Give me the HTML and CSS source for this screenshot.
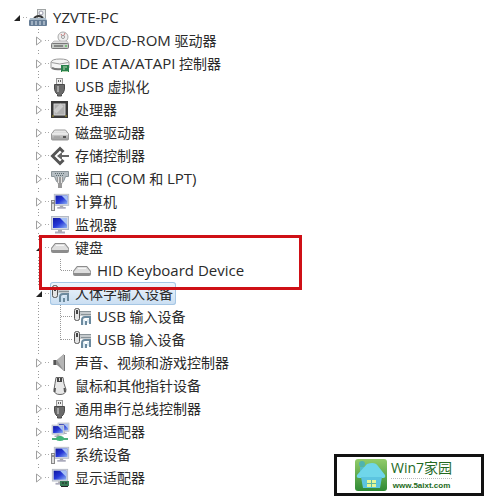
FILE: index.html
```
<!DOCTYPE html>
<html lang="zh-CN">
<head>
<meta charset="utf-8">
<title>设备管理器</title>
<link rel="stylesheet" href="styles.css">
</head>
<body>
<svg class="defs" aria-hidden="true">
  <defs>
    <linearGradient id="metal" x1="0" y1="0" x2="0" y2="1"><stop offset="0" stop-color="#f4f4f4"/><stop offset="1" stop-color="#9a9a9a"/></linearGradient>
    <linearGradient id="screen" x1="0" y1="0" x2="1" y2="1"><stop offset="0" stop-color="#1018a0"/><stop offset=".5" stop-color="#2638d8"/><stop offset="1" stop-color="#8fb4f4"/></linearGradient>
    <linearGradient id="leaf" x1="0" y1="0" x2="0" y2="1"><stop offset="0" stop-color="#92cc6a"/><stop offset="1" stop-color="#2f8a34"/></linearGradient>
    <symbol id="pc" viewBox="0 0 20 20"><rect x="9.500" y="1.500" width="8" height="12" fill="#e4e8e8" stroke="#a0a4a4"/><circle cx="13" cy="5" r="2" fill="#fff" stroke="#99a"/><path d="M6 10q5-4 9 0" fill="none" stroke="#333" stroke-width="2"/><path d="M2 10h16l1 3H1z" fill="#a9bac8"/><rect x="1" y="12" width="18" height="6" rx="1" fill="#667d96"/><path d="M4 13v4M8 13v4M12 13v4M16 13v4" stroke="#dce6ee"/></symbol>
    <symbol id="dvd" viewBox="0 0 20 20"><circle cx="13" cy="6" r="5" fill="#eee" stroke="#aaa"/><path d="M11 3l2 3 2-4" fill="none" stroke="#c77"/><circle cx="13" cy="6" r="1.500" fill="#fff" stroke="#999"/><path d="M4 10h13l2 3H1z" fill="#ddd" stroke="#999" stroke-width=".5"/><rect x="1.500" y="12.500" width="17" height="5" rx="1" fill="#c4c8c4" stroke="#777"/><path d="M4 15h9" stroke="#444"/><path d="M15 15h2" stroke="#3b3"/></symbol>
    <symbol id="ide" viewBox="0 0 20 20"><path d="M1 8q1-3 9-3t9 3v6q-9 3-18 0z" fill="#f4f4f4" stroke="#999"/><path d="M1.500 8.500q8 3 17 0" fill="none" stroke="#999"/><path d="M2 14q4 2 9 1" fill="none" stroke="#777" stroke-width="2"/><rect x="11" y="11" width="8" height="7" fill="#28804c"/><path d="M13 13h4M13 15h2M12 17.500h6" stroke="#b8d8b0"/></symbol>
    <symbol id="usb" viewBox="0 0 20 20"><rect x="6.500" y="1.500" width="6" height="6" fill="#eee" stroke="#999"/><path d="M8.500 3v2M10.500 3v2" stroke="#666"/><path d="M4.500 7.500h10v5q-1 4-3 5v1.500h-4v-1.500q-2-1-3-5z" fill="#6a6a6a" stroke="#4a4a4a"/><path d="M8 9v6" stroke="#a4a4a4" stroke-width="2"/></symbol>
    <symbol id="cpu" viewBox="0 0 20 20"><rect x="1" y="1" width="17" height="17" fill="#3a3a3a"/><rect x="4" y="4" width="11" height="11" fill="#b0b0b0" stroke="#d4d4d4"/><path d="M5 12L12 5" stroke="#ccc" stroke-width="4"/><path d="M2 16h2M15 16h2" stroke="#a93"/></symbol>
    <symbol id="disk" viewBox="0 0 20 20"><path d="M1.500 11l3-4h11l3 4v5q0 1-1 1h-15q-1 0-1-1z" fill="url(#metal)" stroke="#999"/><path d="M2 11h16" stroke="#fff"/><path d="M4 14h6" stroke="#999"/><rect x="13" y="13" width="3" height="2" fill="#555"/></symbol>
    <symbol id="storage" viewBox="0 0 20 20"><path d="M13.500 6L10 2.500 2.500 10l7.500 7.500L13.500 14" fill="none" stroke="#555" stroke-width="3"/><path d="M19 10H9" stroke="#666" stroke-width="2"/><path d="M7 10l5-4v8z" fill="#666"/></symbol>
    <symbol id="port" viewBox="0 0 20 20"><path d="M1.500 2.500h17v5h-3l-2 5h-7l-2-5h-3z" fill="#b5bdc2" stroke="#8a9499"/><path d="M5 4.500h10M6 6.500h8" stroke="#5c6c70" stroke-dasharray="1 1"/><path d="M7 8h6v5l-1 2v4H8v-4l-1-2z" fill="#999"/><path d="M8.500 8v6M11.500 8v6" stroke="#e4e4e4"/></symbol>
    <symbol id="monitor" viewBox="0 0 20 20"><rect x="1.500" y="1.500" width="17" height="13" fill="#d5dae3" stroke="#b4bac4"/><rect x="3" y="3" width="14" height="10" fill="url(#screen)"/><path d="M10 3h7v7z" fill="#a7c1f4"/><rect x="8" y="15" width="4" height="2" fill="#aaa"/><path d="M5 17.500h10" stroke="#aab" stroke-width="2"/></symbol>
    <symbol id="computer" viewBox="0 0 20 20"><use href="#monitor" x="3" y="1" width="17" height="17"/><rect x="1.500" y="8.500" width="3" height="10" fill="#ddd" stroke="#888"/><path d="M2 11h2" stroke="#444"/></symbol>
    <symbol id="keyboard" viewBox="0 0 20 20"><path d="M5 5h10l4 5v3q0 2-2 2H3q-2 0-2-2v-3z" fill="#8c8c8c"/><path d="M5.500 6h9l4 5q0 1-1 1h-15q-1 0-1-1z" fill="#dedede"/><path d="M6 7.500h8" stroke="#f6f6f6"/></symbol>
    <symbol id="hid" viewBox="0 0 20 20"><path d="M8 4h11v5H8z" fill="#c6cbce"/><path d="M8 4.500h11M9 7.500h10" stroke="#8a9499"/><rect x="2.500" y="1.500" width="5" height="12" rx="2" fill="#e4e4e4" stroke="#555"/><path d="M5 3v4" stroke="#444" stroke-width="2"/><path d="M10 18v-5q0-3 3-3h5v7M14 18v-4" fill="none" stroke="#6c8a9e" stroke-width="2"/><path d="M12 18v-5M16 16v-4" stroke="#b9d6e8"/></symbol>
    <symbol id="sound" viewBox="0 0 20 20"><path d="M3 7h4l7-6v17l-7-6H3z" fill="#929292"/><path d="M7 7l7-6v17" fill="#b5b5b5"/><path d="M14.500 2v16" stroke="#777"/><path d="M5 7v5" stroke="#555" stroke-width="2"/></symbol>
    <symbol id="mouse" viewBox="0 0 20 20"><path d="M6 1.500h7l1 6 2 6q0 5-6 5t-6-5l1-6z" fill="#e7e7e7" stroke="#666"/><path d="M7 2h5v4H7z" fill="#444"/><path d="M9.500 2v3" stroke="#ddd"/><path d="M5 12l-.500 4M14.500 12l.500 4" stroke="#555" stroke-width="2"/></symbol>
    <symbol id="network" viewBox="0 0 20 20"><use href="#monitor" x="7" y="0" width="13" height="13"/><use href="#monitor" x="1" y="2" width="14" height="14"/><path d="M2 17h16M10 14v3" stroke="#4cae7a" stroke-width="2"/><ellipse cx="10" cy="16.500" rx="4" ry="2.500" fill="#42b478"/></symbol>
    <symbol id="display" viewBox="0 0 20 20"><use href="#monitor" x="1" y="0" width="18" height="18"/><rect x="10" y="13" width="9" height="5" fill="#377b55"/><path d="M12 15h2M15 15h2M11 18.500h7" stroke="#222"/></symbol>
    <symbol id="closed" viewBox="0 0 8 10"><path d="M1.500 1l5 4-5 4z" fill="#fff" stroke="#a0a0a0"/></symbol>
    <symbol id="open" viewBox="0 0 8 10"><path d="M7 2v6H1z" fill="#222"/></symbol>
  </defs>
</svg>
<main>
  <ul class="tree">
    <li>
      <div class="row"><button class="toggle" aria-label="折叠"><svg><use href="#open"/></svg></button><svg class="icon"><use href="#pc"/></svg><span class="label"><span class="latin">YZVTE-PC</span></span></div>
      <ul class="branch">
        <li><div class="row"><button class="toggle" aria-label="展开"><svg><use href="#closed"/></svg></button><svg class="icon"><use href="#dvd"/></svg><span class="label"><span class="latin">DVD/CD-ROM</span> 驱动器</span></div></li>
        <li><div class="row"><button class="toggle" aria-label="展开"><svg><use href="#closed"/></svg></button><svg class="icon"><use href="#ide"/></svg><span class="label"><span class="latin">IDE ATA/ATAPI</span> 控制器</span></div></li>
        <li><div class="row"><button class="toggle" aria-label="展开"><svg><use href="#closed"/></svg></button><svg class="icon"><use href="#usb"/></svg><span class="label"><span class="latin">USB</span> 虚拟化</span></div></li>
        <li><div class="row"><button class="toggle" aria-label="展开"><svg><use href="#closed"/></svg></button><svg class="icon"><use href="#cpu"/></svg><span class="label">处理器</span></div></li>
        <li><div class="row"><button class="toggle" aria-label="展开"><svg><use href="#closed"/></svg></button><svg class="icon"><use href="#disk"/></svg><span class="label">磁盘驱动器</span></div></li>
        <li><div class="row"><button class="toggle" aria-label="展开"><svg><use href="#closed"/></svg></button><svg class="icon"><use href="#storage"/></svg><span class="label">存储控制器</span></div></li>
        <li><div class="row"><button class="toggle" aria-label="展开"><svg><use href="#closed"/></svg></button><svg class="icon"><use href="#port"/></svg><span class="label">端口 <span class="latin">(COM</span> 和 <span class="latin">LPT)</span></span></div></li>
        <li><div class="row"><button class="toggle" aria-label="展开"><svg><use href="#closed"/></svg></button><svg class="icon"><use href="#computer"/></svg><span class="label">计算机</span></div></li>
        <li><div class="row"><button class="toggle" aria-label="展开"><svg><use href="#closed"/></svg></button><svg class="icon"><use href="#monitor"/></svg><span class="label">监视器</span></div></li>
        <li class="marked"><div class="row"><button class="toggle" aria-label="折叠"><svg><use href="#open"/></svg></button><svg class="icon"><use href="#keyboard"/></svg><span class="label">键盘</span></div>
          <ul class="leaves">
            <li><div class="row"><svg class="icon"><use href="#keyboard"/></svg><span class="label"><span class="latin">HID Keyboard Device</span></span></div></li>
          </ul>
        </li>
        <li><div class="row"><button class="toggle" aria-label="折叠"><svg><use href="#open"/></svg></button><span class="selected"><svg class="icon"><use href="#hid"/></svg><span class="label">人体字输入设备</span></span></div>
          <ul class="leaves">
            <li><div class="row"><svg class="icon"><use href="#hid"/></svg><span class="label"><span class="latin">USB</span> 输入设备</span></div></li>
            <li><div class="row"><svg class="icon"><use href="#hid"/></svg><span class="label"><span class="latin">USB</span> 输入设备</span></div></li>
          </ul>
        </li>
        <li><div class="row"><button class="toggle" aria-label="展开"><svg><use href="#closed"/></svg></button><svg class="icon"><use href="#sound"/></svg><span class="label">声音、视频和游戏控制器</span></div></li>
        <li><div class="row"><button class="toggle" aria-label="展开"><svg><use href="#closed"/></svg></button><svg class="icon"><use href="#mouse"/></svg><span class="label">鼠标和其他指针设备</span></div></li>
        <li><div class="row"><button class="toggle" aria-label="展开"><svg><use href="#closed"/></svg></button><svg class="icon"><use href="#usb"/></svg><span class="label">通用串行总线控制器</span></div></li>
        <li><div class="row"><button class="toggle" aria-label="展开"><svg><use href="#closed"/></svg></button><svg class="icon"><use href="#network"/></svg><span class="label">网络适配器</span></div></li>
        <li><div class="row"><button class="toggle" aria-label="展开"><svg><use href="#closed"/></svg></button><svg class="icon"><use href="#computer"/></svg><span class="label">系统设备</span></div></li>
        <li><div class="row"><button class="toggle" aria-label="展开"><svg><use href="#closed"/></svg></button><svg class="icon"><use href="#display"/></svg><span class="label">显示适配器</span></div></li>
      </ul>
    </li>
  </ul>
</main>
<aside class="badge">
  <svg class="logo" viewBox="0 0 32 32"><rect width="32" height="32" rx="3" fill="url(#leaf)"/><circle cx="7" cy="5" r="3" fill="#4fb3b0"/><path d="M5 8h5v6H5z" fill="#54bcc8"/><path d="M12 5q8-3 11 2l7 9q1 3-2 3H4q-3 0-2-3z" fill="#6fd6ea"/><path d="M6 18h21l-2 11H8z" fill="#5cc4e0"/><rect x="12" y="21" width="9" height="7" fill="#e4f79a"/><path d="M16.500 21v7M12 24.500h9" stroke="#5cb9a0"/></svg>
  <div class="badge-text"><strong class="name">Win7家园</strong><a class="url" href="#">www.5aixt.com</a></div>
</aside>
</body>
</html>
```
FILE: styles.css
```
*,
*::after {
  box-sizing: border-box;
}

body {
  position: relative;
  min-height: 100vh;
  margin: 0;
  padding: 6px 0 0 13px;
  background: #fff;
  color: #2a2a2a;
  font: 14px/23px "Open Sans", "Noto Sans CJK SC", sans-serif;
}

.defs {
  position: absolute;
  width: 0;
  height: 0;
}

ul {
  margin: 0;
  padding: 0;
  list-style: none;
}

.row {
  display: flex;
  align-items: center;
  height: 23px;
  white-space: nowrap;
}

.latin {
  font-size: 15px;
}

.toggle {
  display: flex;
  align-items: center;
  width: 15px;
  height: 15px;
  padding: 0;
  border: 0;
  background: linear-gradient(#fff, #fff) 0 0 / 10px 15px no-repeat,
    repeating-linear-gradient(90deg, #aaa 0 1px, transparent 1px 3px) 10px 7px / 5px 1px no-repeat;
}

.toggle svg {
  width: 8px;
  height: 10px;
}

.icon {
  flex: none;
  width: 20px;
  height: 20px;
  margin-right: 5px;
}

.branch {
  padding-left: 22px;
  background: repeating-linear-gradient(#999 0 1px, transparent 1px 3px) 25px 0 / 1px calc(100% - 12px) no-repeat;
}

.leaves {
  padding-left: 37px;
  background: repeating-linear-gradient(#999 0 1px, transparent 1px 2px) 25px 0 / 1px calc(100% - 11px) no-repeat;
}

.leaves .row {
  margin-left: -11px;
  padding-left: 11px;
  background: repeating-linear-gradient(90deg, #999 0 1px, transparent 1px 2px) 0 11px / 11px 1px no-repeat;
}

.marked {
  position: relative;
}

.marked::after {
  content: "";
  position: absolute;
  top: -1px;
  left: 4px;
  width: 263px;
  height: 55px;
  border: 3px solid #cf1016;
}

.selected {
  display: flex;
  align-items: center;
  height: 23px;
  padding-right: 3px;
  border-radius: 3px;
  background: linear-gradient(#f0f6fc, #c9def2);
  box-shadow: inset 0 0 0 1px #a5c6e4;
}

.badge {
  position: absolute;
  right: 0;
  bottom: 0;
  display: flex;
  align-items: center;
  gap: 4px;
  width: 150px;
  height: 42px;
  padding-left: 18px;
  border: 3px solid #111;
  background: #fff;
}

.logo {
  width: 32px;
  height: 32px;
}

.badge-text {
  display: flex;
  flex-direction: column;
}

.name {
  border-bottom: 1px dotted #bbb;
  color: #23691f;
  font-size: 14px;
  font-weight: 400;
  line-height: 20px;
}

.url {
  color: #1d6b1b;
  font: bold 8px/14px "Liberation Sans", sans-serif;
  text-align: center;
  text-decoration: none;
}
```
